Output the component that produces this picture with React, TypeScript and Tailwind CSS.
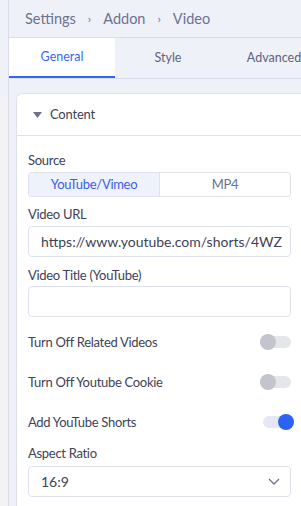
import React from 'react';

const font = { fontFamily: 'Lato, "Noto Sans", sans-serif' };

const Toggle: React.FC<{ on?: boolean }> = ({ on }) => (
  <div className="relative w-[31px] h-[16px] flex items-center">
    <div className={`w-full h-[12px] rounded-full ${on ? 'ml-[3px] bg-[#e4e8f3]' : 'bg-[#e5e6ea]'}`} />
    <div
      className={`absolute top-0 w-[16px] h-[16px] rounded-full ${on ? 'right-[-3px] bg-[#2b63f6]' : 'left-0 bg-[#c2c5ce]'}`}
    />
  </div>
);

const SwitchRow: React.FC<{ label: string; on?: boolean }> = ({ label, on }) => (
  <div className="flex items-center justify-between h-[40px]">
    <span className="text-[13px] leading-[16px] tracking-[-0.3px] text-[#3d4259]">{label}</span>
    <Toggle on={on} />
  </div>
);

const Label: React.FC<{ children: React.ReactNode; className?: string }> = ({ children, className }) => (
  <div className={`text-[13px] leading-[16px] tracking-[-0.3px] text-[#3d4259] ${className ?? ''}`}>{children}</div>
);

export default function App() {
  return (
    <div className="w-[301px] h-[506px] overflow-hidden flex bg-[#eff1f8]" style={font}>
      <div className="w-[9px] shrink-0 flex flex-col border-r border-[#d9dcea]">
        <div className="h-[97px] bg-[#eff1f8]" />
        <div className="flex-1 bg-[#f3f3f5]" />
      </div>
      <div className="flex-1 flex flex-col min-w-0">
        <div className="h-[38px] flex items-center pl-[16px] gap-[12px] text-[14.5px] text-[#6b7190] border-b border-[#d9dcea] shrink-0">
          <span>Settings</span>
          <span className="text-[12px]">›</span>
          <span>Addon</span>
          <span className="text-[12px]">›</span>
          <span>Video</span>
        </div>
        <div className="h-[41px] flex border-b border-[#d9dcea] shrink-0 text-[12.5px]">
          <div className="w-[106px] shrink-0 bg-white flex items-center justify-center text-[#3568f5] border-b-2 border-[#2f66f6]">
            General
          </div>
          <div className="w-[106px] shrink-0 flex items-center justify-center text-[#5d6380]">Style</div>
          <div className="w-[106px] shrink-0 flex items-center justify-center text-[#5d6380]">Advanced</div>
        </div>
        <div className="pt-[14px] pl-[7px]">
          <div className="bg-white border border-[#dfe2ee] border-r-0 rounded-tl-[6px]">
            <div className="h-[42px] flex items-center pl-[16px] gap-[8px] border-b border-[#dfe2ee]">
              <svg width="9" height="6" viewBox="0 0 9 6">
                <path d="M0 0h9L4.5 6z" fill="#6b7190" />
              </svg>
              <span className="text-[13px] tracking-[-0.2px] text-[#3d4259]">Content</span>
            </div>
            <div className="pl-[11px] pr-[10px] pt-[16px]">
              <Label className="mb-[4px]">Source</Label>
              <div className="flex h-[25px] border border-[#dfe2ee] rounded-[3px] overflow-hidden text-[13px] tracking-[-0.3px]">
                <div className="flex-1 bg-[#edf2fb] text-[#3d5cf0] flex items-center justify-center border-r border-[#dfe2ee]">
                  YouTube/Vimeo
                </div>
                <div className="flex-1 text-[#6b7190] flex items-center justify-center">MP4</div>
              </div>
              <Label className="mt-[9px] mb-[4px]">Video URL</Label>
              <div className="h-[31px] border border-[#dfe2ee] rounded-[4px] flex items-center pl-[12px] text-[14px] text-[#3d4259] overflow-hidden whitespace-nowrap">
                https://www.youtube.com/shorts/4WZ
              </div>
              <Label className="mt-[10px] mb-[3px]">Video Title (YouTube)</Label>
              <div className="h-[31px] border border-[#dfe2ee] rounded-[4px]" />
              <div className="mt-[5px]">
                <SwitchRow label="Turn Off Related Videos" />
                <SwitchRow label="Turn Off Youtube Cookie" />
                <SwitchRow label="Add YouTube Shorts" on />
              </div>
              <Label className="mt-[3px] mb-[5px]">Aspect Ratio</Label>
              <div className="h-[31px] border border-[#dfe2ee] rounded-[4px] flex items-center justify-between pl-[12px] pr-[10px] text-[14px] text-[#3d4259]">
                <span>16:9</span>
                <svg width="12" height="7" viewBox="0 0 12 7" fill="none">
                  <path d="M1 1l5 5 5-5" stroke="#6b7190" strokeWidth="1.3" />
                </svg>
              </div>
              <div className="h-[20px]" />
            </div>
          </div>
        </div>
      </div>
    </div>
  );
}
